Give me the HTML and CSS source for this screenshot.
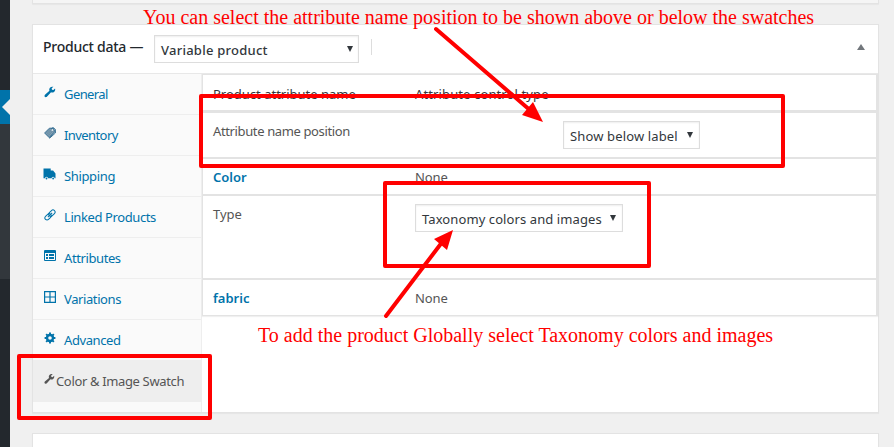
FILE: index.html
```html
<!DOCTYPE html>
<html lang="en">
<head>
<meta charset="utf-8">
<title>Product data</title>
<link rel="stylesheet" href="styles.css">
</head>
<body>
<div class="admin">
  <aside class="menu"><div class="menu-top"></div><div class="menu-current"></div><div class="menu-sub"></div><div class="menu-rest"></div></aside>
  <main class="main">
    <div class="box box-prev"></div>
    <section class="box product">
      <header class="head">
        <h2 class="title">Product data —</h2>
        <div class="select select-type"><span class="t-variable">Variable product</span><i class="caret"></i></div>
        <i class="divider"></i>
        <i class="toggle"></i>
      </header>
      <div class="body">
        <nav class="tabs">
          <a class="tab"><svg viewBox="0 0 20 20"><path d="M16.7 9.8c1.7-1.2 2.4-3.500 1.700-5.600l-2.800 2.400-2.300-.5-.5-2.200 2.900-2.500c-2-.7-4.400-.2-5.800 1.500-1.200 1.500-1.500 3.400-.8 5.100l-7.500 6.500c-1.400 1.200-1 4.600 2 4 .6-.1 1.200-.5 1.600-1l6.500-7c1.700.6 3.500.3 5-.7z"/></svg><span class="t-general">General</span></a>
          <a class="tab"><svg viewBox="0 0 20 20"><defs><pattern id="check" width="3" height="3" patternUnits="userSpaceOnUse"><path fill="#a5b8c4" d="M0 0h3v3H0z"/><path fill="#427394" d="M0 0h1.500v1.500H0zM1.500 1.500H3V3H1.500z"/></pattern></defs><path fill="url(#check)" stroke="#397194" stroke-width="1.600" d="M1 10 9 2l7 0 2 6-9 10z"/><path fill="none" stroke="#28658b" stroke-width="1.500" d="m12 3 3-2 4 3v6L9 19"/><circle cx="14" cy="5" r="1.400" fill="#fff"/></svg><span class="t-inventory">Inventory</span></a>
          <a class="tab"><svg class="truck" viewBox="0 0 20 20"><path d="M0 1h12v3h4l4 5v8h-1.500a2.500 2.500 0 0 0-5 0h-6a2.500 2.500 0 0 0-5 0H0z"/><circle cx="5" cy="17.500" r="1.500"/><circle cx="16" cy="17.500" r="1.500"/></svg><span class="t-shipping">Shipping</span></a>
          <a class="tab"><svg viewBox="0 0 20 20"><g fill="none" stroke="#0073aa" stroke-width="1.700" transform="rotate(-45 10 10)"><rect x="-.5" y="6.500" width="12" height="7" rx="3.500"/><rect x="8.500" y="6.500" width="12" height="7" rx="3.500"/><path d="M5 10h10"/></g></svg><span class="t-linked">Linked Products</span></a>
          <a class="tab"><svg viewBox="0 0 12 12"><path fill-rule="evenodd" d="M1 0h10q1 0 1 1v9q0 1-1 1H1q-1 0-1-1V1q0-1 1-1zm0 3v7h10V3z"/><path d="M2 4h2v2H2zm3 0h5v2H5zM2 7h2v2H2zm3 0h5v2H5z"/></svg><span class="t-attributes">Attributes</span></a>
          <a class="tab"><svg viewBox="0 0 12 12"><path fill="none" stroke="#0073aa" stroke-width="1.200" d="M.6.6h10.800v10.800H.6zM6 .6v10.800M.6 6h10.800"/></svg><span class="t-variations">Variations</span></a>
          <a class="tab"><svg viewBox="0 0 20 20"><circle cx="10" cy="10" r="5" fill="none" stroke="#0073aa" stroke-width="4"/><path fill="none" stroke="#0073aa" stroke-width="3.200" d="M10 1v3m0 12v3M1 10h3m12 0h3M3.600 3.600l2.100 2.100m8.600 8.600 2.100 2.100M3.600 16.400l2.100-2.100m8.600-8.600 2.100-2.100"/></svg><span class="t-advanced">Advanced</span></a>
          <a class="tab tab-active"><svg viewBox="0 0 20 20"><path d="M16.700 9.800c1.700-1.200 2.400-3.500 1.700-5.600l-2.800 2.400-2.300-.5-.5-2.200 2.900-2.500c-2-.7-4.400-.2-5.800 1.500-1.200 1.500-1.500 3.400-.8 5.100l-7.500 6.500c-1.400 1.200-1 4.600 2 4 .6-.1 1.200-.5 1.600-1l6.500-7c1.700.6 3.500.3 5-.7z"/></svg><span class="t-swatch">Color &amp; Image Swatch</span></a>
        </nav>
        <div class="panel">
          <div class="row row-head"><span class="t-pan">Product attribute name</span><span class="t-act">Attribute control type</span></div>
          <div class="row row-position"><span class="t-anp">Attribute name position</span><div class="select select-label"><span class="t-below">Show below label</span><i class="caret"></i></div></div>
          <div class="row row-color"><strong class="t-color">Color</strong><span class="t-none">None</span></div>
          <div class="row row-type"><span class="t-type">Type</span><div class="select select-tax"><span class="t-tax">Taxonomy colors and images</span><i class="caret"></i></div></div>
          <div class="row row-fabric"><strong class="t-fabric">fabric</strong><span class="t-none">None</span></div>
        </div>
      </div>
    </section>
    <div class="box box-next"></div>
  </main>
</div>
<div class="note note-top"><span>You can select the attribute name position to be shown above or below the swatches</span></div>
<div class="note note-bottom"><span>To add the product Globally select Taxonomy colors and images</span></div>
<svg class="marks" width="894" height="447" viewBox="0 0 894 447">
  <g fill="none" stroke="#f00" stroke-width="4" stroke-linejoin="round">
    <rect x="201" y="96" width="582" height="70"/>
    <rect x="385" y="183" width="264" height="83"/>
    <rect x="19" y="356" width="191" height="62"/>
    <path stroke-linecap="round" d="M436 29 531 111M386 316 443 241"/>
  </g>
  <path fill="#f00" d="m543 122-21-7 11-13zM453 230l-6 20-13-11z"/>
</svg>
</body>
</html>
```

FILE: styles.css
```css
* { box-sizing: border-box; }
body { margin: 0; width: 894px; height: 447px; overflow: hidden; position: relative; background: #f0f0f0; font: 13px/20px "Noto Sans", sans-serif; color: #555; }
.admin { display: flex; height: 447px; }
.menu { width: 10px; display: flex; flex-direction: column; background: #23282d; }
.menu-top { height: 90px; }
.menu-current { height: 34px; background: #0073aa; display: flex; align-items: center; justify-content: flex-end; }
.menu-current::after { content: ""; border: 8px solid transparent; border-left: 0; border-right-color: #f0f0f0; }
.menu-sub { height: 155px; background: #32373c; }
.main { width: 847px; margin-left: 22px; }
.box { background: #fff; border: 1px solid #e3e3e3; box-shadow: 0 1px 1px rgba(0,0,0,.04); }
.box-prev { height: 4px; border-top: 0; background: #f5f5f5; margin-bottom: 20px; }
.product { height: 389px; margin-bottom: 20px; }
.box-next { height: 30px; }
.head { height: 49px; border-bottom: 1px solid #e8e8e8; display: flex; align-items: flex-start; padding: 10px 13px 0 10px; }
.title { margin: 2px 0 0; width: 111px; font-size: 14px; line-height: 20px; font-weight: 500; letter-spacing: -.25px; color: #23282d; white-space: nowrap; }
.select { height: 28px; border: 1px solid #ddd; background: #fff; box-shadow: inset 0 1px 2px rgba(0,0,0,.07); color: #32373c; display: flex; align-items: flex-start; justify-content: space-between; padding: 4px 5px 0 6px; white-space: nowrap; }
.select-type { width: 205px; font-weight: 500; letter-spacing: .25px; }
.select-label { width: 137px; letter-spacing: .14px; padding-right: 6px; }
.select-tax { width: 208px; letter-spacing: .09px; padding-right: 6px; }
.caret { margin-top: 6px; border: 3px solid transparent; border-top: 6px solid #32373c; border-bottom: 0; }
.divider { width: 1px; height: 16px; margin: 4px 0 0 12px; background: #ddd; }
.toggle { margin: 9px 0 0 auto; border: 4px solid transparent; border-bottom: 6px solid #72777c; border-top: 0; }
.body { display: flex; height: 338px; }
.tabs { width: 169px; background: #fafafa; border-right: 1px solid #eee; display: flex; flex-direction: column; }
.tab { height: 41px; border-bottom: 1px solid #eee; display: flex; align-items: flex-start; padding: 10px 0 0 10px; color: #0073aa; white-space: nowrap; letter-spacing: -.4px; }
.tab svg { width: 12px; height: 12px; margin: 2px 8px 0 1px; fill: currentColor; flex: none; }
.tab .truck { width: 13px; height: 12px; margin-left: 0; }
.tab-active { background: #eee; color: #555; }
.tab-active svg { width: 11px; margin-right: 1px; }
.t-general, .t-inventory { letter-spacing: -.58px; }
.t-shipping { letter-spacing: -.36px; }
.t-swatch { letter-spacing: -.35px; }
.t-anp { letter-spacing: -.37px; }
.t-act { letter-spacing: .12px; }
.t-none { letter-spacing: -.1px; }
.panel { width: 676px; }
.row { border: 1px solid #e3e3e3; border-right-width: 2px; display: grid; grid-template-columns: 202px 1fr; align-items: start; padding-left: 10px; white-space: nowrap; }
.row-head { height: 37px; padding-top: 9px; color: #32373c; }
.row-position { height: 47px; border-top-width: 2px; padding-top: 8px; grid-template-columns: 350px 1fr; }
.row-color { height: 37px; padding-top: 8px; }
.row-type { height: 84px; padding-top: 8px; }
.row-fabric { height: 37px; padding-top: 8px; box-shadow: 0 1px 1px rgba(0,0,0,.06); }
.row strong { color: #0073aa; font-weight: 600; }
.note { position: absolute; font: 20px/24px "Liberation Serif", serif; color: #f00; white-space: nowrap; }
.note-top { left: 143px; top: 5px; }
.note-bottom { left: 258px; top: 323px; }
.marks { position: absolute; left: 0; top: 0; }
```
